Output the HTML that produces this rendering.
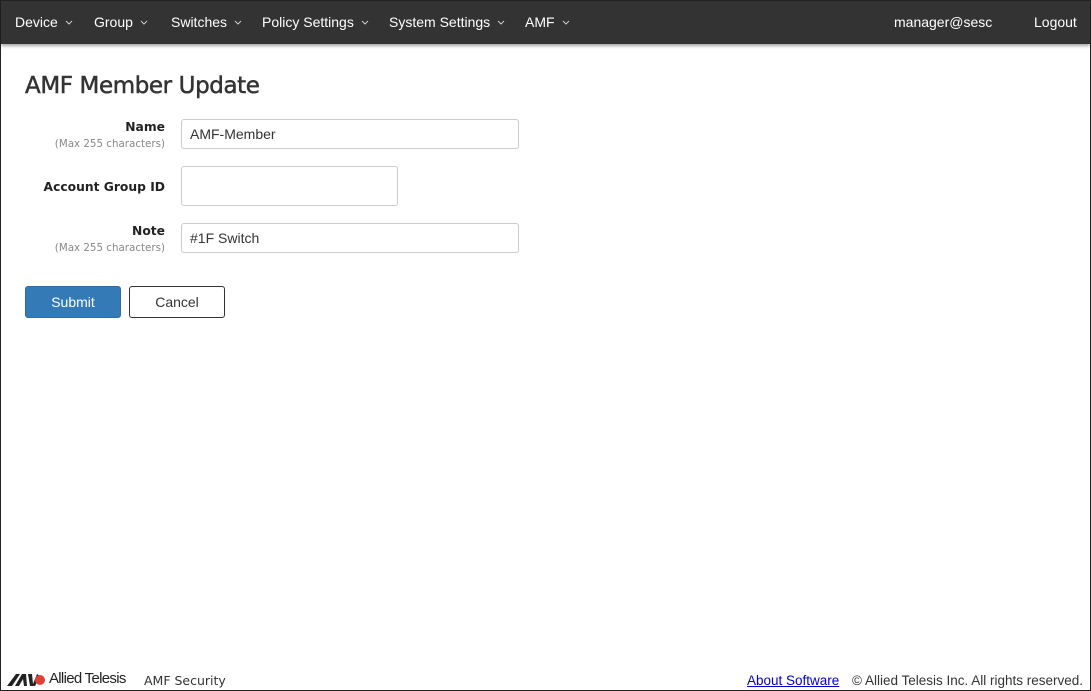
<!DOCTYPE html>
<html><head><meta charset="utf-8"><style>
*{box-sizing:border-box;margin:0;padding:0}
body{width:1091px;height:691px;position:relative;overflow:hidden;background:#fff;font-family:"Liberation Sans","DejaVu Sans",sans-serif;color:#333;border:1px solid #222}
.nav{position:absolute;left:0;top:0;width:1089px;height:43px;background:#333;box-shadow:0 2px 3px rgba(0,0,0,.35);color:#fff;font-size:14px}
.nav span{position:absolute;top:13px;white-space:nowrap}
.nav svg{margin-left:7px;vertical-align:middle;position:relative;top:-1px}
h1{position:absolute;left:24px;top:72px;font-size:23px;font-weight:normal;color:#333;font-family:"DejaVu Sans","Liberation Sans",sans-serif;letter-spacing:-0.4px;-webkit-text-stroke:0.5px #333}
.lbl{position:absolute;right:925px;text-align:right;font-weight:bold;font-size:12.3px;font-family:"DejaVu Sans",sans-serif;color:#222}
.sub{position:absolute;right:925px;text-align:right;font-size:10.3px;color:#888;font-family:"DejaVu Sans",sans-serif}
.inp{position:absolute;left:180px;border:1px solid #ccc;border-radius:3px;font-size:14px;padding:7px 8px;color:#333}
.btn{position:absolute;top:285px;height:32px;width:96px;border-radius:3px;font-size:14px;text-align:center;line-height:30px}
.foot{position:absolute;top:672px;font-size:13px;white-space:nowrap}
</style></head><body>
<div class="nav">
<span style="left:14px">Device<svg width="8" height="5"><path d="M1 1L4 4L7 1" stroke="#ccc" fill="none"/></svg></span>
<span style="left:93px">Group<svg width="8" height="5"><path d="M1 1L4 4L7 1" stroke="#ccc" fill="none"/></svg></span>
<span style="left:170px">Switches<svg width="8" height="5"><path d="M1 1L4 4L7 1" stroke="#ccc" fill="none"/></svg></span>
<span style="left:261px">Policy Settings<svg width="8" height="5"><path d="M1 1L4 4L7 1" stroke="#ccc" fill="none"/></svg></span>
<span style="left:388px">System Settings<svg width="8" height="5"><path d="M1 1L4 4L7 1" stroke="#ccc" fill="none"/></svg></span>
<span style="left:524px">AMF<svg width="8" height="5"><path d="M1 1L4 4L7 1" stroke="#ccc" fill="none"/></svg></span>
<span style="left:893px">manager@sesc</span>
<span style="left:1033px">Logout</span>
</div>
<h1>AMF Member Update</h1>
<div class="lbl" style="top:119px">Name</div>
<div class="sub" style="top:137px">(Max 255 characters)</div>
<div class="inp" style="top:118px;width:338px;height:30px;padding-top:6px">AMF-Member</div>
<div class="lbl" style="top:179px">Account Group ID</div>
<div class="inp" style="top:165px;width:217px;height:40px"></div>
<div class="lbl" style="top:223px">Note</div>
<div class="sub" style="top:241px">(Max 255 characters)</div>
<div class="inp" style="top:222px;width:338px;height:30px;padding-top:6px">#1F Switch</div>
<div class="btn" style="left:24px;background:#337ab7;color:#fff;border:1px solid #2e6da4">Submit</div>
<div class="btn" style="left:128px;background:#fff;color:#333;border:1px solid #333">Cancel</div>
<svg style="position:absolute;left:6px;top:672px" width="40" height="13" viewBox="0 0 40 13"><polygon points="0,13 9,1 13,1 5,13" fill="#222"/><polygon points="8,13 15,1 19,1 20,13 17,13 16,6 12,13" fill="#222"/><polygon points="21,1 25,1 26,11 30,1 33,3 28,13 23,13" fill="#222"/><circle cx="33" cy="7" r="5" fill="#e0403a"/></svg>
<div class="foot" style="left:48px;font-size:15px;top:669px;color:#222;letter-spacing:-0.7px">Allied Telesis</div>
<div class="foot" style="left:143px;color:#333;font-family:'DejaVu Sans',sans-serif;font-size:12.5px">AMF Security</div>
<div class="foot" style="left:746px;color:#00c;text-decoration:underline;font-size:13.5px">About Software</div>
<div class="foot" style="left:851px;color:#333;font-size:13.5px">© Allied Telesis Inc. All rights reserved.</div>
</body></html>
